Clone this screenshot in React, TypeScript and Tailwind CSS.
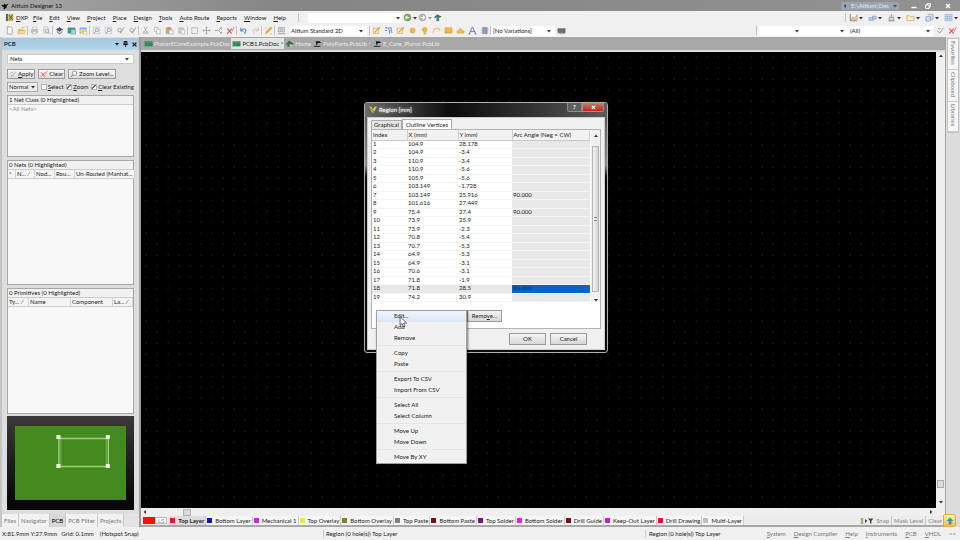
import type { ReactNode } from 'react';
import clsx from 'clsx';

const MENUS = ['File', 'Edit', 'View', 'Project', 'Place', 'Design', 'Tools', 'Auto Route', 'Reports', 'Window', 'Help'];

const LAYERS = [
  { name: 'Top Layer', color: 'bg-[#d9203a]' },
  { name: 'Bottom Layer', color: 'bg-[#1414b4]' },
  { name: 'Mechanical 1', color: 'bg-[#dc1edc]' },
  { name: 'Top Overlay', color: 'bg-[#ece83c]' },
  { name: 'Bottom Overlay', color: 'bg-[#808020]' },
  { name: 'Top Paste', color: 'bg-[#808080]' },
  { name: 'Bottom Paste', color: 'bg-[#7c0c14]' },
  { name: 'Top Solder', color: 'bg-[#80107c]' },
  { name: 'Bottom Solder', color: 'bg-[#e41ee4]' },
  { name: 'Drill Guide', color: 'bg-[#7c0c1c]' },
  { name: 'Keep-Out Layer', color: 'bg-[#c81ec8]' },
  { name: 'Drill Drawing', color: 'bg-[#dc1438]' },
  { name: 'Multi-Layer', color: 'bg-[#c0c0c0]' },
];

const VERTICES = [
  ['104.9', '28.178', ''],
  ['104.9', '-3.4', ''],
  ['110.9', '-3.4', ''],
  ['110.9', '-5.6', ''],
  ['105.9', '-5.6', ''],
  ['103.149', '-1.728', ''],
  ['103.149', '25.916', '90.000'],
  ['101.616', '27.449', ''],
  ['75.4', '27.4', '90.000'],
  ['73.9', '25.9', ''],
  ['73.9', '-2.3', ''],
  ['70.8', '-5.4', ''],
  ['70.7', '-5.3', ''],
  ['64.9', '-5.3', ''],
  ['64.9', '-3.1', ''],
  ['70.6', '-3.1', ''],
  ['71.8', '-1.9', ''],
  ['71.8', '28.5', '90.000'],
  ['74.2', '30.9', ''],
];

const MENU_GROUPS = [
  ['Edit...', 'Add', 'Remove'],
  ['Copy', 'Paste'],
  ['Export To CSV', 'Import From CSV'],
  ['Select All', 'Select Column'],
  ['Move Up', 'Move Down'],
  ['Move By XY'],
];

// 10x10 drawings for the toolbars
const ICONS: Record<string, ReactNode> = {
  doc: <path d="M2.5 1h4L8 2.6V9H2.5z" fill="#fff" stroke="#8c8c94" strokeWidth=".8" />,
  open: (
    <>
      <path d="M1 3h3l1 1h3v4.5H1z" fill="#e9bd58" />
      <path d="M1 8.6 2.8 5H9.6L8 8.6z" fill="#f8dd8c" stroke="#c99a3c" strokeWidth=".4" />
      <path d="M5 2.4 8.6 1" stroke="#c99a3c" strokeWidth=".8" />
    </>
  ),
  print: (
    <>
      <path d="M3 1.2h4V4H3z" fill="#fff" stroke="#a8a8b0" strokeWidth=".6" />
      <path d="M1.5 4h7v3.4h-7z" fill="#c4c6cc" stroke="#9c9ca4" strokeWidth=".5" />
      <path d="M3 6h4v2.8H3z" fill="#f4f4f4" stroke="#a0a0a8" strokeWidth=".5" />
    </>
  ),
  preview: (
    <>
      <path d="M2 1h4l1 1v6H2z" fill="#f4f4f4" stroke="#a8a8b0" strokeWidth=".6" />
      <circle cx="5.4" cy="5.4" r="2" fill="#dfe4ec" stroke="#8c929c" strokeWidth=".7" />
      <path d="m7 7 2 2" stroke="#8c929c" strokeWidth=".9" />
    </>
  ),
  layers: (
    <>
      <path d="M1 4 5 1.4 9 4 5 6.4z" fill="#48566c" />
      <path d="M2 6 5 8.6 8.4 6" fill="none" stroke="#6c94b0" strokeWidth="1.2" />
    </>
  ),
  board: (
    <>
      <path d="M1 2h8v6H1z" fill="#3c9c84" stroke="#6898a0" strokeWidth=".6" />
      <path d="M4.4 4h5v5h-5z" fill="#a8d0e4" stroke="#5888a4" strokeWidth=".5" />
    </>
  ),
  cfg: (
    <>
      <path d="M1 2h7v6H1z" fill="#f0d488" stroke="#c8a04c" strokeWidth=".6" />
      <path d="M1 2h7v1.6H1z" fill="#8cb0d8" />
      <path d="M5 6h4v3H5z" fill="#fff" stroke="#a8a060" strokeWidth=".5" />
    </>
  ),
  zoomdoc: (
    <>
      <path d="M1.4 1.4h7v7h-7z" fill="#fafafa" stroke="#b0b0b8" strokeWidth=".6" />
      <circle cx="5.4" cy="4.4" r="2" fill="#e4e8ee" stroke="#84848c" strokeWidth=".7" />
      <path d="M4 6 2.4 8" stroke="#84848c" strokeWidth=".9" />
    </>
  ),
  zoomsel: (
    <>
      <path d="m8.8 1.4-3 5.4" stroke="#9a9aa0" strokeWidth=".9" />
      <circle cx="4" cy="4.6" r="2" fill="#f0f0f0" stroke="#84848c" strokeWidth=".7" />
      <path d="m4.4 6.4 1.6 2" stroke="#84848c" strokeWidth=".9" />
    </>
  ),
  zoom: (
    <>
      <circle cx="5.6" cy="4" r="2.8" fill="#fafafa" stroke="#64646c" strokeWidth=".8" />
      <path d="M3.6 6 1.4 8.6" stroke="#64646c" strokeWidth="1.1" />
    </>
  ),
  cut: (
    <>
      <path d="m3.4 1 2.6 5M6.6 1 4 6" stroke="#a0a0a6" strokeWidth=".8" />
      <circle cx="3.4" cy="7.4" r="1.2" fill="none" stroke="#a0a0a6" strokeWidth=".8" />
      <circle cx="6.6" cy="7.4" r="1.2" fill="none" stroke="#a0a0a6" strokeWidth=".8" />
    </>
  ),
  copy: (
    <>
      <path d="M1.6 1.4h4v5h-4z" fill="#f8f8f8" stroke="#a8a8b0" strokeWidth=".7" />
      <path d="M4 3.6h4v5H4z" fill="#f8f8f8" stroke="#a8a8b0" strokeWidth=".7" />
    </>
  ),
  paste: (
    <>
      <path d="M1.4 2h5.4v6.4H1.4z" fill="#d8a860" stroke="#a88448" strokeWidth=".5" />
      <path d="M3 1.2h2.4v1.4H3z" fill="#909090" />
      <path d="M4.4 4.4h4.4V9H4.4z" fill="#f4f8fc" stroke="#8898b0" strokeWidth=".6" />
    </>
  ),
  stamp: (
    <>
      <path d="M2 2h5v6H2z" fill="#d4d4d8" stroke="#a4a4a8" strokeWidth=".6" />
      <path d="M4.6 4h4v5h-4z" fill="#fafafa" stroke="#a4a4a8" strokeWidth=".6" />
    </>
  ),
  rect: <path d="M2 2h6.4v6.4H2z" fill="none" stroke="#8c8c94" strokeWidth=".8" strokeDasharray="1.4 .6" />,
  move: <path d="M5 1v8M1 5h8M4 2l1-1 1 1M4 8l1 1 1-1M2 4 1 5l1 1M8 4l1 1-1 1" fill="none" stroke="#94949c" strokeWidth=".8" />,
  desel: <path d="M1 5h4l3-3M5 5l3 3M7 2h1.4v1.6M7 8h1.4V6.4" fill="none" stroke="#94949c" strokeWidth=".9" />,
  clear: (
    <>
      <path d="m1.4 3 5 5.4M6.4 3l-5 5.4" stroke="#dc5048" strokeWidth="1.2" />
      <path d="M9.2 1 6.6 6" stroke="#e09890" strokeWidth="1.2" />
    </>
  ),
  undo: <path d="M2 2v3.4h3.2M2.2 5C4 2.4 8 3 7.6 6 7.4 7.4 6.4 8 5.4 8.4" fill="none" stroke="#5c8cd4" strokeWidth="1.2" />,
  redo: <path d="M8 2v3.4H4.8M7.8 5C6 2.4 2 3 2.4 6c.2 1.4 1.2 2 2.2 2.4" fill="none" stroke="#bcc0c8" strokeWidth="1" />,
  pencil: (
    <>
      <path d="M1.6 8.6 2.4 6 7.4 1l1.6 1.6-5 5z" fill="#ecac50" stroke="#b87830" strokeWidth=".4" />
      <path d="M1.4 2.6 3 1.4M7 8.6h2" stroke="#c8a070" strokeWidth=".8" />
    </>
  ),
  browse: (
    <>
      <path d="M1.6 1.6h2.8v5H1.6zM5.4 1.6h2.8v5H5.4z" fill="#d0d4da" stroke="#8c929c" strokeWidth=".6" />
      <path d="M1 8.6h8" stroke="#8c929c" strokeWidth=".9" />
    </>
  ),
  route: (
    <>
      <path d="M1.4 2.4h6v6h-6z" fill="#f7ecd0" stroke="#d8ac60" strokeWidth=".8" />
      <path d="M3 7 8.8 1.2" stroke="#d89c3c" strokeWidth="1.2" />
    </>
  ),
  diff: <path d="M1 2h3l2 2.6v4M1 5h2.4M5 2h3v5h1.4" fill="none" stroke="#648cc4" strokeWidth="1.1" />,
  pad: <circle cx="5" cy="5" r="3" fill="#efb850" stroke="#d8a040" strokeWidth=".5" />,
  via: (
    <>
      <circle cx="5.4" cy="3.8" r="2.8" fill="#efb440" />
      <path d="M1 4.4h4M4.4 5v4h2V5" stroke="#d09428" fill="#f4c860" strokeWidth=".6" />
    </>
  ),
  arc: <path d="M1.4 8C1.4 1.4 8 1 8.8 5.4" fill="none" stroke="#e4bc6c" strokeWidth="1.2" />,
  fill: <path d="M1 2h8v6H1z" fill="#f0b840" stroke="#c8a058" strokeWidth=".6" />,
  poly: <path d="M1 8V5h2.4V3h3v2H9v3z" fill="#efb850" stroke="#d4a850" strokeWidth=".4" />,
  comp: (
    <>
      <path d="M3 1.6h5v7H3z" fill="#8c9cc0" stroke="#687894" strokeWidth=".5" />
      <path d="M1 3h2M1 5h2M1 7h2M8 3h1.4M8 5h1.4M8 7h1.4" stroke="#a0a8b8" strokeWidth=".7" />
    </>
  ),
  chip: (
    <>
      <path d="M1 3h8v4.4H1z" fill="#6c7468" stroke="#484c48" strokeWidth=".6" />
      <path d="M2 8.4h7" stroke="#8c948c" strokeWidth=".8" />
    </>
  ),
  back: (
    <>
      <circle cx="5" cy="5" r="3.8" fill="#7cac58" stroke="#547c3c" strokeWidth=".5" />
      <path d="M7.4 5H3M4.6 3.2 2.8 5l1.8 1.8" fill="none" stroke="#fff" strokeWidth="1.2" />
    </>
  ),
  fwd: (
    <>
      <circle cx="5" cy="5" r="3.8" fill="#b8b8b8" stroke="#949494" strokeWidth=".5" />
      <path d="M2.8 5h4M5.4 3.2 7.2 5 5.4 6.8" fill="none" stroke="#fff" strokeWidth="1.2" />
    </>
  ),
  home: (
    <>
      <path d="M.8 5.4 4.6 1.4l5 2.6-2 1.4z" fill="#3c7c48" />
      <path d="M3.8 5.2h3V9h-3z" fill="#5078b4" />
    </>
  ),
  homeTab: (
    <>
      <path d="M.6 6 4.6 1.6l5 3.6-2 1.2z" fill="#2c7838" />
      <path d="M2.6 6h2.6v2.6H2.6z" fill="#3458a8" />
      <path d="M5.2 6h2.6v2.6H5.2z" fill="#e4c43c" />
    </>
  ),
  pcb: (
    <>
      <path d="M.6 2.6h8.8v5.6H.6z" fill="#2c8454" />
      <path d="M2 4h2.4v2.6H2zM6 4h2" stroke="#94ccac" strokeWidth=".5" fill="#1c6038" />
    </>
  ),
  lib: (
    <>
      <path d="M3 2.4h4.4L9 4.4H5.6L4 7.4z" fill="#1c1c1c" />
      <path d="M.8 7.6h7.4v1.2H.8z" fill="#303030" />
    </>
  ),
  dxp: (
    <>
      <path d="M1 1h2.4v8H1z" fill="#6c6838" />
      <path d="M3.8 1h5.4v8H3.8z" fill="#c8b45c" />
      <path d="m4.4 2.4 4 5M8.4 2.4l-4 5" stroke="#5c5020" strokeWidth="1" />
    </>
  ),
  chart: (
    <>
      <path d="M1.4 1v7.6H9" stroke="#707478" fill="none" strokeWidth=".9" />
      <path d="m2 7 2.4-2.6L6 6l3-4v6H2z" fill="#e4cc9c" stroke="#a88c5c" strokeWidth=".5" />
    </>
  ),
  align: <path d="M1 5h5v3.4H1zM5 3.4h4.2V7H5z" fill="#b8c8e0" stroke="#8c9cb8" strokeWidth=".6" />,
  find: <path d="M5 1v4M2.4 5h5v3.4h-5zM1 8.8h8M3.4 2.4v2M6.8 2.4v2" fill="#d4d4dc" stroke="#8c8c98" strokeWidth=".7" />,
  folder: <path d="M1 3h3l1 1h4v4.4H1z" fill="#f4ecc0" stroke="#b0a87c" strokeWidth=".7" />,
  room: <path d="M1 4h5v5H1zM3 1.4h6V7H6" fill="#d0dcf0" stroke="#7c98c4" strokeWidth=".7" />,
  grid: <path d="M1 1.6h8v7H1zM1 4h8M1 6.4h8M3.6 1.6v7M6.4 1.6v7" fill="#d4e0f0" stroke="#8ca8d0" strokeWidth=".6" />,
  tick: <path d="M2 5.4 4 8 8.4 2M2 3h3" fill="none" stroke="#a4a4aa" strokeWidth="1.1" />,
  text: <path d="M1.4 8.8 4.8 1.2h.5l3.3 7.6M2.8 6.2h4.4M.6 8.8h2M7.2 8.8h2.2" fill="none" stroke="#58688c" strokeWidth=".9" />,
};

function Icon({ name, className = 'size-[9px]' }: { name: string; className?: string }) {
  return (
    <svg viewBox="0 0 10 10" className={clsx('shrink-0', className)} aria-hidden="true">
      {ICONS[name]}
    </svg>
  );
}

function Tool({ name }: { name: string }) {
  return (
    <button aria-label={name} className="flex w-3 shrink-0 items-center justify-center">
      <Icon name={name} />
    </button>
  );
}

function Sep() {
  return <span className="h-[9px] w-px shrink-0 bg-[#c4c4c4]" />;
}

function Arrow({ dir = 'down', className = 'text-[#333]' }: { dir?: 'down' | 'up' | 'left' | 'right'; className?: string }) {
  const paths = { down: 'M0 1h4L2 3.4z', up: 'M0 3h4L2 .6z', left: 'M3 0v4L.6 2z', right: 'M1 0v4l2.4-2z' };
  return (
    <svg viewBox="0 0 4 4" className={clsx('size-1 shrink-0', className)} aria-hidden="true">
      <path d={paths[dir]} fill="currentColor" />
    </svg>
  );
}

function Combo({ label, value, className }: { label: string; value: string; className?: string }) {
  return (
    <div className={clsx('flex h-[10px] shrink-0 items-center bg-white pr-1', className)}>
      <select aria-label={label} className="h-full min-w-0 flex-1 appearance-none px-0.5 outline-none">
        <option>{value}</option>
      </select>
      <Arrow />
    </div>
  );
}

function Check({ label, checked }: { label: string; checked?: boolean }) {
  return (
    <label className="flex items-center gap-px">
      <input
        type="checkbox"
        defaultChecked={checked}
        className="size-[6px] appearance-none border border-[#b4b4b4] bg-[#f4f4f4] checked:bg-[linear-gradient(135deg,#fff_35%,#50688c_36%,#50688c_60%,#fff_61%)]"
      />
      <span>
        <u>{label[0]}</u>
        {label.slice(1)}
      </span>
    </label>
  );
}

function TitleBar() {
  return (
    <header className="flex h-[11px] shrink-0 items-center bg-linear-to-r from-[#a6a6a6] via-[#858585] via-30% to-[#929292] px-px text-[#111]">
      <svg viewBox="0 0 10 10" className="size-[8px]" aria-hidden="true">
        <path d="M0 3 3 4l1-2 2 1.4L9.6 2 7.4 4.6 7 7 4.4 9H2.8l1-2L2 6z" fill="#111" />
      </svg>
      <h1 className="ml-0.5">Altium Designer 13</h1>
      <div className="mr-3 ml-auto flex h-2 w-[58px] items-center justify-between bg-[#9aa4b0] px-0.5 text-[#dfe6f0]">
        <Arrow dir="left" className="text-[#3c4c68]" />
        <span>E:\Altium\Des</span>
        <Arrow className="text-[#3c4c68]" />
      </div>
      <div className="flex gap-2 pr-2 text-white">
        <button aria-label="Minimize">
          <svg viewBox="0 0 6 6" className="size-[6px]"><path d="M.5 4.5h5" stroke="currentColor" strokeWidth="1.4" /></svg>
        </button>
        <button aria-label="Restore">
          <svg viewBox="0 0 6 6" className="size-[6px]"><path d="M.6 2h3.6v3.4H.6zM2 2V.6h3.4v3.2H4.2" fill="none" stroke="currentColor" /></svg>
        </button>
        <button aria-label="Close" className="ml-1.5">
          <svg viewBox="0 0 6 6" className="size-[6px]"><path d="m1 1 4 4M5 1 1 5" stroke="currentColor" strokeWidth="1.4" /></svg>
        </button>
      </div>
    </header>
  );
}

function MenuBar() {
  return (
    <nav className="flex h-[13px] shrink-0 items-center bg-[#f0f0f0] pl-[5px]">
      <button className="mr-[5px] flex items-center gap-0.5">
        <Icon name="dxp" />
        <span><u>D</u>XP</span>
      </button>
      <div className="flex gap-[7px]">
        {MENUS.map((m) => (
          <button key={m} className="px-0">
            <u>{m[0]}</u>
            {m.slice(1)}
          </button>
        ))}
      </div>
      <div className="ml-3 flex flex-1 items-center gap-px">
        <Sep />
        <div className="ml-2 flex h-[10px] w-[94px] items-center bg-white pr-0.5">
          <input aria-label="Address" className="h-full w-full min-w-0 flex-1 outline-none" />
          <Arrow />
        </div>
        <Icon name="back" />
        <Arrow />
        <Icon name="fwd" />
        <Arrow className="text-[#999]" />
        <Icon name="home" />
      </div>
      <Sep />
      <div className="flex gap-[5px] pr-0.5 pl-[3px]">
        {['chart', 'align', 'find', 'folder', 'room', 'grid'].map((n) => (
          <button key={n} aria-label={n} className="flex items-center gap-px">
            <Icon name={n} />
            <Arrow />
          </button>
        ))}
      </div>
    </nav>
  );
}

function Toolbar() {
  const groups = [
    ['doc', 'open'],
    ['print', 'preview'],
    ['layers', 'board', 'cfg'],
    ['zoomdoc', 'zoomdoc', 'zoomsel', 'zoomsel'],
    ['cut', 'copy', 'paste', 'stamp'],
    ['rect', 'move', 'desel', 'clear'],
    ['undo', 'redo'],
    ['pencil'],
    ['browse'],
  ];
  return (
    <div className="flex h-[13px] shrink-0 items-center bg-[#f0f0f0] pl-[3px]">
      {groups.map((g, i) => (
        <div key={i} className="flex shrink-0 items-center">
          {i > 0 && <Sep />}
          {g.map((n, j) => (
            <Tool key={j} name={n} />
          ))}
        </div>
      ))}
      <Combo label="View configuration" value="Altium Standard 2D" className="ml-0.5 w-[78px]" />
      <div className="ml-0.5 flex items-center">
        <Sep />
        {['route', 'diff', 'route', 'pad', 'via', 'arc', 'fill', 'poly', 'text', 'comp'].map((n, i) => (
          <Tool key={i} name={n} />
        ))}
        <Sep />
      </div>
      <Combo label="Variations" value="[No Variations]" className="w-16" />
      <Tool name="chip" />
      <div className="ml-auto flex items-center pr-0.5">
        <Sep />
        <Combo label="Filter net" value="" className="ml-0.5 w-[44px]" />
        <Combo label="Filter component" value="" className="w-[45px]" />
        <Combo label="Filter" value="(All)" className="w-[86px]" />
        <Tool name="tick" />
        <Tool name="clear" />
      </div>
    </div>
  );
}

function ListBox({ title, className, children }: { title: string; className: string; children?: ReactNode }) {
  return (
    <section className={clsx('flex min-h-0 flex-col border border-[#a8a8a8] bg-[#f8f8f8]', className)}>
      <h3 className="flex h-[9px] shrink-0 items-center border-b border-[#ccc] bg-[#f1f1f1] px-px">{title}</h3>
      {children}
    </section>
  );
}

function Columns({ names, grid }: { names: string[]; grid: string }) {
  return (
    <table className="w-full">
      <thead>
        <tr className={clsx('grid h-[9px] border-b border-[#ccc] bg-[#f4f4f4]', grid)}>
          {names.map((n) => (
            <th key={n} className="flex items-center border-r border-[#d4d4d4] px-px font-normal whitespace-nowrap">
              {n}
            </th>
          ))}
        </tr>
      </thead>
    </table>
  );
}

function PcbPanel() {
  const button = 'flex h-[10px] items-center gap-px border border-[#9c9c9c] bg-linear-to-b from-[#f8f8f8] to-[#dcdcdc] px-px';
  return (
    <aside className="flex w-[141px] shrink-0 flex-col border-x-2 border-[#c4c4c4] border-r-[#9c9c9c] bg-[#dedede] pt-px">
      <div className="flex h-3 shrink-0 items-center bg-linear-to-b from-[#a4c8e0] to-[#b4d4e8] px-0.5">
        <h2 className="font-bold">PCB</h2>
        <div className="ml-auto flex items-center gap-1">
          <Arrow className="text-[#111]" />
          <svg viewBox="0 0 5 6" className="h-[6px] w-[5px]"><path d="M1 .5h3v3H1zM0 3.6h5M2.5 3.5V6" stroke="#111" fill="#555" strokeWidth=".8" /></svg>
          <svg viewBox="0 0 5 5" className="size-[5px]"><path d="m.6.6 3.8 3.8M4.4.6.6 4.4" stroke="#111" strokeWidth="1.2" /></svg>
        </div>
      </div>
      <div className="flex min-h-0 flex-1 flex-col px-[5px] pt-1 pb-1">
        <Combo label="Mode" value="Nets" className="border border-[#ccc]" />
        <div className="mt-[5px] flex gap-[3px]">
          <button className={button}>
            <Icon name="tick" className="size-2" />
            <span><u>A</u>pply</span>
          </button>
          <button className={button}>
            <Icon name="clear" className="size-2" />
            Clear
          </button>
          <button className={button}>
            <Icon name="zoom" className="size-2" />
            Zoom Level...
          </button>
        </div>
        <div className="my-[3px] flex items-center justify-between">
          <div className="flex h-[10px] w-[31px] items-center border border-[#aaa] bg-[#ececec] pr-0.5">
            <select aria-label="Highlight" className="h-full min-w-0 flex-1 appearance-none pl-px outline-none">
              <option>Normal</option>
            </select>
            <Arrow />
          </div>
          <Check label="Select" />
          <Check label="Zoom" checked />
          <Check label="Clear Existing" checked />
        </div>
        <div className="flex min-h-0 flex-1 flex-col gap-[3px]">
          <ListBox title="1 Net Class (0 Highlighted)" className="flex-[61]">
            <p className="px-px text-[#8c8c8c]">&lt;All Nets&gt;</p>
          </ListBox>
          <ListBox title="0 Nets (0 Highlighted)" className="flex-[126]">
            <Columns names={['*', 'N... ∕', 'Nod...', 'Rou...', 'Un-Routed (Manhat...']} grid="grid-cols-[8px_19px_20px_20px_1fr]" />
          </ListBox>
          <ListBox title="0 Primitives (0 Highlighted)" className="flex-[126]">
            <Columns names={['Ty... ∕', 'Name', 'Component', 'La... ∕']} grid="grid-cols-[21px_42px_42px_1fr]" />
          </ListBox>
        </div>
        <div className="mt-0.5 h-[94px] shrink-0 bg-linear-to-b from-[#3c3a3c] to-[#050505] px-2 py-[10px]">
          <svg viewBox="0 0 110 74" className="size-full bg-[#448a1c]" preserveAspectRatio="none">
            <path d="M43.5 12.5h49v28h-49z" fill="none" stroke="#a4d084" strokeWidth="1.4" />
            <path d="M45.5 10v32M90.5 10v32" stroke="#7cb458" />
            <path d="M41 9h4v4h-4zM90 9h4v4h-4zM41 38h4v4h-4zM90 38h4v4h-4z" fill="#eefce4" />
          </svg>
        </div>
      </div>
      <div className="flex h-[13px] shrink-0 items-center bg-[#e4e4e4] text-[#777]">
        {['Files', 'Navigator', 'PCB', 'PCB Filter', 'Projects'].map((t) => (
          <button key={t} className={clsx('h-full border-r border-[#c8c8c8] px-0.5', t === 'PCB' ? 'bg-[#d8d8d8] text-black' : 'bg-[#f2f2f2]')}>
            {t}
          </button>
        ))}
      </div>
    </aside>
  );
}

function DocTabs() {
  const tabs = [
    ['pcb', 'PlanarECoreExample.PcbDoc'],
    ['pcb', 'PCB1.PcbDoc *'],
    ['homeTab', 'Home'],
    ['lib', 'PolyParts.PcbLib *'],
    ['lib', 'E_Core_Planar.PcbLib'],
  ];
  return (
    <div className="flex h-[15px] shrink-0 items-center border-b-2 border-[#dcdcdc] bg-[#a8a8a8] pl-0.5 text-[#e8e8e8]">
      {tabs.map(([icon, name], i) => (
        <button key={name} className={clsx('flex h-[11px] items-center gap-px px-px', i === 1 && 'bg-[#e4e4e4] text-[#222]')}>
          <Icon name={icon} />
          {name}
        </button>
      ))}
    </div>
  );
}

function LayerBar() {
  return (
    <div className="flex h-[11px] shrink-0 items-center overflow-hidden border-b-2 border-[#a8a8a8] bg-[#ececec] pl-0.5 whitespace-nowrap text-[#222]">
      <span className="h-[7px] w-3 shrink-0 bg-[#f41010]" />
      <span className="mr-0.5 h-[7px] border border-[#bbb] bg-white px-0.5 leading-[5px] text-[#888]">LS</span>
      {LAYERS.map((l, i) => (
        <button key={l.name} className={clsx('flex h-full items-center gap-[3px] border-r border-[#ccc] px-px', i === 0 ? 'bg-[#dcdcdc] font-bold' : 'bg-[#f6f6f6]')}>
          <span className={clsx('size-[5px]', l.color)} />
          {l.name}
        </button>
      ))}
      <div className="ml-auto flex h-full items-center text-[#888]">
        <svg viewBox="0 0 14 8" className="h-2 w-3.5" aria-hidden="true">
          <path d="M1 1.4h2v2H1zM1 4.6h2v2H1z" fill="#c8c070" stroke="#888840" strokeWidth=".5" />
          <path d="m5 2 2.4 2L5 6zM8 1.6h5.4L11.4 4v3l-1.4-1V4z" fill="#444" />
        </svg>
        {['Snap', 'Mask Level', 'Clear'].map((t) => (
          <button key={t} className="h-full border-r border-[#ccc] px-0.5">
            {t}
          </button>
        ))}
      </div>
    </div>
  );
}

function Workspace() {
  return (
    <main className="flex min-w-0 flex-1 flex-col">
      <DocTabs />
      <div className="flex min-h-0 flex-1">
        <div className="flex-1 bg-black bg-[radial-gradient(circle,#121212_1px,transparent_1px)] bg-size-[11px_11px]" />
        <div className="flex w-[9px] flex-col items-center bg-[#efefef] pt-0.5 pb-1">
          <Arrow dir="up" />
          <span className="mt-auto mb-3 h-2 w-[7px] border border-[#aaa] bg-[#ddd]" />
          <Arrow />
        </div>
      </div>
      <div className="flex h-2 shrink-0 items-center bg-[#efefef] pr-3 pl-0.5">
        <Arrow dir="left" />
        <span className="ml-9 h-[7px] w-2 border border-[#b4b4b4] bg-[#dcdcdc]" />
        <Arrow dir="right" className="ml-auto text-[#333]" />
      </div>
      <LayerBar />
    </main>
  );
}

function SideTabs() {
  return (
    <aside className="flex w-[15px] shrink-0 flex-col items-center border-l border-[#a4a4a4] bg-[#dcdcdc] pt-px">
      <div className="flex w-3 flex-col border border-[#c4c4c4] bg-[#f6f6f6] text-[#777]">
        {['Favorites', 'Clipboard', 'Libraries'].map((t) => (
          <button key={t} className="flex items-center border-b border-[#ccc] pt-0.5 pb-1 [writing-mode:vertical-rl]">
            {t}
          </button>
        ))}
      </div>
    </aside>
  );
}

function StatusBar() {
  return (
    <footer className="grid h-[13px] shrink-0 grid-cols-[323fr_322fr_315fr] items-center bg-[#f0f0f0] whitespace-nowrap text-[#222]">
      <div className="flex gap-1 pl-0.5">
        <span>X:81.9mm Y:27.9mm</span>
        <span>Grid: 0.1mm</span>
        <span className="ml-0.5">(Hotspot Snap)</span>
      </div>
      <div className="border-l border-[#ccc] pl-0.5">Region (0 hole(s)) Top Layer</div>
      <div className="flex items-center border-l border-[#ccc] pl-[3px]">
        Region (0 hole(s)) Top Layer
        <div className="ml-auto flex gap-2 pr-1 text-[#777]">
          {['System', 'Design Compiler', 'Help', 'Instruments', 'PCB', 'VHDL'].map((t) => (
            <button key={t}>
              <u>{t[0]}</u>
              {t.slice(1)}
            </button>
          ))}
          <button>&gt;&gt;</button>
        </div>
      </div>
    </footer>
  );
}

function RegionDialog() {
  const button = 'h-3 border border-[#9a9a9a] bg-linear-to-b from-[#f4f4f4] to-[#d8d8d8]';
  return (
    <div
      role="dialog"
      aria-label="Region [mm]"
      className="absolute top-[102px] left-[364px] flex w-[244px] flex-col rounded-[3px] border border-[#b0b0b0] bg-linear-to-b from-[#4c4c4c] via-[#8c8c8c] via-25% to-[#0c0c0c] to-30% px-0.5 pb-0.5"
    >
      <div className="-mx-0.5 flex h-[14px] items-start rounded-t-[2px] bg-linear-to-r from-[#6c6c6c] via-[#0c0c0c] via-35% to-[#5c5c5c] pl-1">
        <svg viewBox="0 0 10 10" className="mt-[3px] size-2" aria-hidden="true">
          <path d="M0 1h3l2 3 2-3h3L6 8H4z" fill="#d8c450" />
          <path d="m2 3 5 5" stroke="#6c6420" />
        </svg>
        <h2 className="mt-[3px] ml-0.5 text-white [text-shadow:0_0_3px_#fff]">Region [mm]</h2>
        <div className="mr-[3px] ml-auto flex">
          <button aria-label="Help" className="flex h-[9px] w-[15px] items-center justify-center rounded-bl-[2px] border border-t-0 border-[#8c8c8c] bg-[#606060] font-bold text-white">?</button>
          <button aria-label="Close" className="flex h-[9px] w-[22px] items-center justify-center rounded-br-[2px] border border-t-0 border-[#a88] bg-linear-to-b from-[#d07868] to-[#b42818]">
            <svg viewBox="0 0 6 6" className="size-[5px]"><path d="m1 1 4 4M5 1 1 5" stroke="#fff" strokeWidth="1.4" /></svg>
          </button>
        </div>
      </div>
      <div className="border border-[#ccc] bg-[#f0f0f0] px-[3px] pt-px pb-1">
        <div className="flex items-end">
          <button className="h-[9px] border border-b-0 border-[#aaa] bg-[#e4e4e4] px-0.5 leading-2">Graphical</button>
          <button className="h-[10px] border border-b-0 border-[#aaa] bg-white px-[3px] leading-2">Outline Vertices</button>
        </div>
        <div className="border border-[#b4b4b4] bg-white pb-1.5">
          <div className="flex">
            <table className="h-[172px] flex-1 table-fixed border-collapse leading-[6px]">
              <colgroup>
                <col className="w-[35px]" />
                <col className="w-[51px]" />
                <col className="w-[54px]" />
                <col />
              </colgroup>
              <thead className="bg-[#f2f2f2]">
                <tr className="h-[10px] border-b border-[#c8c8c8] text-left">
                  {['Index', 'X (mm)', 'Y (mm)', 'Arc Angle (Neg = CW)'].map((h) => (
                    <th key={h} className="border-r border-[#d0d0d0] px-px pt-px pb-0 font-normal">{h}</th>
                  ))}
                </tr>
              </thead>
              <tbody>
                {VERTICES.map(([x, y, arc], i) => (
                  <tr key={i} className={clsx('border-b border-[#f4f4f4]', i === 17 && 'bg-[#e8e8e8]')}>
                    <td className="px-px pt-0 pb-px">{i + 1}</td>
                    <td className="px-px pt-0 pb-px">{x}</td>
                    <td className="px-px pt-0 pb-px">{y}</td>
                    <td className={clsx('px-px pt-0 pb-px', i === 17 ? 'bg-[#0862cc] text-[#062c60]' : 'bg-[#e8e8e8]')}>{arc}</td>
                  </tr>
                ))}
              </tbody>
            </table>
            <div className="ml-px flex w-[9px] flex-col items-center bg-[#f0f0f0] pt-1 pb-0">
              <Arrow dir="up" />
              <span className="mt-2 mb-1.5 flex w-[7px] flex-1 items-center justify-center border border-[#b4b4b4] bg-linear-to-r from-[#f4f4f4] to-[#d4d4d4]">
                <span className="h-1 w-[3px] border-y border-[#888]" />
              </span>
              <Arrow />
            </div>
          </div>
          <div className="mt-2 flex pl-[95px]">
            <button className={clsx(button, 'w-[35px] leading-[10px]')}>Remo<u>v</u>e...</button>
          </div>
        </div>
        <div className="mt-1 flex justify-end gap-1 pr-[14px]">
          <button className={clsx(button, 'w-[37px] leading-[10px]')}>OK</button>
          <button className={clsx(button, 'w-[37px] leading-[10px]')}>Cancel</button>
        </div>
      </div>
    </div>
  );
}

function ContextMenu() {
  return (
    <div role="menu" className="absolute top-[310px] left-[376px] w-[91px] border border-[#a0a0a0] bg-[#f1f1f1] shadow-[1px_1px_2px_#0008]">
      {MENU_GROUPS.map((group, i) => (
        <div key={i} className={clsx('flex flex-col', i > 0 && 'mt-px border-t border-[#e6e6e6] pt-0.5')}>
          {group.map((item) => (
            <button
              key={item}
              role="menuitem"
              className={clsx('h-[11px] pb-px pl-[17px] text-left leading-[10px]', item === 'Edit...' && 'bg-linear-to-b from-[#f0f4fa] to-[#dce6f4]')}
            >
              {item}
            </button>
          ))}
        </div>
      ))}
      {/* mouse pointer */}
      <svg viewBox="0 0 10 14" className="absolute top-[5px] left-[22px] h-3 w-[9px]" aria-hidden="true">
        <path d="M1 .8v10l2.4-2 1.6 4 1.8-.8-1.600-3.800H8.600z" fill="#fff" stroke="#222" strokeWidth=".8" />
      </svg>
    </div>
  );
}

export default function App() {
  return (
    <div className="relative flex h-screen flex-col overflow-hidden bg-[#dcdcdc] font-['Lato','Open_Sans',sans-serif] text-[6px] leading-2 text-[#222]">
      <TitleBar />
      <MenuBar />
      <Toolbar />
      <div className="flex min-h-0 flex-1 bg-[#a8a8a8]">
        <PcbPanel />
        <Workspace />
        <SideTabs />
      </div>
      <StatusBar />
      <RegionDialog />
      <ContextMenu />
      {/* update badge */}
      <div className="absolute right-1 bottom-[13px] flex size-[13px] items-center justify-center rounded-[2px] border border-[#d8b050] bg-linear-to-b from-[#fff0b0] to-[#f4bc48]">
        <svg viewBox="0 0 8 8" className="size-2" aria-hidden="true">
          <path d="M4 .6 7.400 4H5.400v3.400H2.800V4H.6z" fill="#3c8cb4" />
        </svg>
      </div>
    </div>
  );
}
